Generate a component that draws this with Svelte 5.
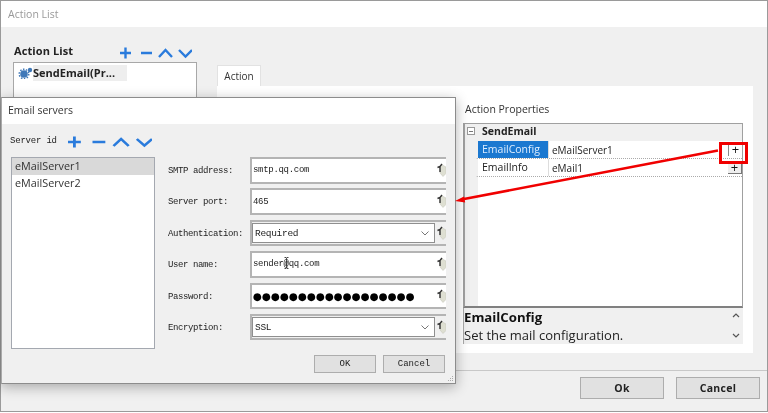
<script>
  const rows = [
    { label: 'SMTP address:', value: 'smtp.qq.com', kind: 'text' },
    { label: 'Server port:', value: '465', kind: 'text' },
    { label: 'Authentication:', value: 'Required', kind: 'combo' },
    { label: 'User name:', value: 'sender@qq.com', kind: 'text', pointer: true },
    { label: 'Password:', value: '●●●●●●●●●●●●●●●●●●', kind: 'pass' },
    { label: 'Encryption:', value: 'SSL', kind: 'combo' }
  ];
</script>

{#snippet toolIcons(cls)}
  <svg class={cls} viewBox="0 0 72 12" preserveAspectRatio="none" aria-hidden="true">
    <path d="M0 6h11M5.500 .5v11M21 6h11M39 10l6.500-7 6.500 7M59 3l6.500 6.500L72 3" fill="none" stroke="#2a7bdc" stroke-width="2.400"/>
  </svg>
{/snippet}

<div class="page">
  <div class="win">
    <header class="win-title">Action List</header>
    <div class="win-body">
      <aside class="left">
        <div class="left-head">
          <h2>Action List</h2>
          {@render toolIcons('tools-main')}
        </div>
        <div class="action-box">
          <svg class="gear" viewBox="0 0 15 12" aria-hidden="true">
            <circle cx="6" cy="7" r="3.800" fill="#3f78b8"/>
            <circle cx="6" cy="7" r="4.800" fill="none" stroke="#3f78b8" stroke-width="1.400" stroke-dasharray="1.500 1.500"/>
            <circle cx="12" cy="3" r="2.200" fill="#3f78b8"/>
          </svg>
          <span class="action-item">SendEmail(Pr...</span>
        </div>
      </aside>
      <section class="tabs">
        <div class="tab">Action</div>
        <div class="tab-panel">
          <div class="props-title">Action Properties</div>
          <div class="grid">
            <div class="grid-group">
              <span class="minus"></span>
              <b>SendEmail</b>
            </div>
            <div class="grid-row">
              <span class="name selected">EmailConfig</span>
              <span class="val">eMailServer1</span>
              <span class="plus flat">+</span>
            </div>
            <div class="grid-row">
              <span class="name">EmailInfo</span>
              <span class="val">eMail1</span>
              <span class="plus">+</span>
            </div>
            <div class="grid-fill"></div>
          </div>
          <div class="desc">
            <div class="desc-text">
              <b>EmailConfig</b>
              <span>Set the mail configuration.</span>
            </div>
            <div class="desc-scroll">
              <svg viewBox="0 0 8 30" aria-hidden="true"><path d="M1 7l3-3 3 3M1 24l3 3 3-3" fill="none" stroke="#555" stroke-width="1.200"/></svg>
            </div>
          </div>
        </div>
      </section>
    </div>
    <footer class="win-foot">
      <button class="btn-main">Ok</button>
      <button class="btn-main">Cancel</button>
    </footer>
  </div>

  <div class="dlg">
    <header class="dlg-title">Email servers</header>
    <div class="dlg-body">
      <div class="dlg-left">
        <div class="sid">
          <span>Server id</span>
          {@render toolIcons('tools-dlg')}
        </div>
        <div class="server-list">
          <div class="server sel">eMailServer1</div>
          <div class="server">eMailServer2</div>
        </div>
      </div>
      <div class="form">
        {#each rows as r}
          <div class="form-row">
            <label for={r.label}>{r.label}</label>
            <div class="field" class:combo={r.kind === 'combo'}>
              {#if r.kind === 'combo'}
                <div class="select" id={r.label}>
                  <span>{r.value}</span>
                  <svg viewBox="0 0 8 5" aria-hidden="true"><path d="M.500 .500L4 4l3.500-3.500" fill="none" stroke="#777"/></svg>
                </div>
              {:else}
                <span class="text" class:dots={r.kind === 'pass'} id={r.label}>{r.value}</span>
              {/if}
              {#if r.pointer}
                <svg class="ibeam" viewBox="0 0 5 12" aria-hidden="true"><path d="M.500 .5h1.500l.5 1 .5-1h1.500M2.500 1.500v9M.500 11.500h1.500l.5-1 .5 1h1.500" fill="none" stroke="#222" stroke-width=".8"/></svg>
              {/if}
              <svg class="shield" viewBox="0 0 9 14" aria-hidden="true">
                <path d="M2 4L4.500 1.500 9 4v6.500L6 13.500 3 10V5z" fill="#dedfd2" stroke="#c2c2b6" stroke-width=".5"/>
                <path d="M.500 4.500L3 3.500 5 1M3 3.500V9" fill="none" stroke="#333" stroke-width="1.400"/>
              </svg>
            </div>
          </div>
        {/each}
        <div class="dlg-actions">
          <button>OK</button>
          <button>Cancel</button>
        </div>
      </div>
    </div>
    <svg class="grip" viewBox="0 0 7 7" aria-hidden="true">
      <path d="M5 1h1v1H5zM3 3h1v1H3zM5 3h1v1H5zM1 5h1v1H1zM3 5h1v1H3zM5 5h1v1H5z" fill="#aaa"/>
    </svg>
  </div>

  <svg class="callout" viewBox="0 0 768 413" aria-hidden="true">
    <path d="M718 150.500L464 199" stroke="#f00000" stroke-width="2.600" fill="none"/>
    <path d="M455 201l9-4.500 1.200 6z" fill="#f00000"/>
    <rect x="720.500" y="143.500" width="26" height="19" fill="none" stroke="#f00000" stroke-width="3"/>
  </svg>
</div>

<style>
  :global(body) { margin: 0; background: #fff; }
  .page {
    position: relative;
    width: 768px;
    height: 413px;
    overflow: hidden;
    font-family: "Open Sans", "Noto Sans", sans-serif;
    color: #222;
    filter: blur(0.35px);
  }
  .win {
    box-sizing: border-box;
    height: 412px;
    border: 1px solid #9a9a9a;
    background: #f0f0f0;
    display: flex;
    flex-direction: column;
  }
  .win-title {
    height: 26px;
    flex: none;
    background: #fff;
    color: #999;
    font-size: 10.5px;
    line-height: 26px;
    padding-left: 7px;
  }
  .win-body {
    flex: 1;
    display: flex;
    padding: 15px 14px 0 12px;
    min-height: 0;
  }
  .left { width: 184px; flex: none; margin-right: 20px; }
  .left-head { display: flex; height: 20px; align-items: flex-start; position: relative; }
  .left-head h2 { margin: 0 0 0 1px; font-size: 11px; line-height: 18px; font-weight: 700; color: #222; letter-spacing: .1px; }
  .tools-main { width: 72px; height: 12px; margin-left: 47px; margin-top: 5px; }
  .action-box {
    box-sizing: border-box;
    height: 80px;
    border: 1px solid #a8a8a8;
    background: #fff;
    display: flex;
    align-items: flex-start;
    padding: 2px 0 0 4px;
  }
  .gear { width: 15px; height: 12px; margin-top: 2px; flex: none; }
  .action-item {
    background: #eee;
    font-weight: 700;
    font-size: 11px;
    line-height: 16px;
    padding: 0 6px 0 0;
    width: 88px;
  }
  .tabs { flex: 1; display: flex; flex-direction: column; padding-top: 23px; min-width: 0; }
  .tab {
    align-self: flex-start;
    box-sizing: border-box;
    width: 44px;
    height: 21px;
    background: #fff;
    border: 1px solid #e2e2e2;
    border-bottom: none;
    font-size: 10px;
    line-height: 20px;
    text-align: center;
    color: #333;
  }
  .tab-panel {
    box-sizing: border-box;
    height: 267px;
    background: #fff;
    padding: 15px 10px 0 246px;
    display: flex;
    flex-direction: column;
  }
  .props-title { font-size: 10.5px; height: 22px; line-height: 16px; color: #333; padding-left: 2px; }
  .grid {
    box-sizing: border-box;
    height: 185px;
    flex: none;
    border: 1px solid #a0a0a0;
    border-bottom: 2px solid #808080;
    border-left-width: 2px;
    background: #f0f0f0;
    display: flex;
    flex-direction: column;
    font-size: 10.5px;
  }
  .grid-group {
    flex: none;
    height: 17px;
    background: #f0f0f0;
    display: flex;
    align-items: flex-start;
    font-size: 10.5px;
    line-height: 14px;
    padding-left: 2px;
  }
  .grid-group b { margin-left: 7px; }
  .minus {
    box-sizing: border-box;
    width: 8px;
    height: 8px;
    margin-top: 3px;
    border: 1px solid #999;
    background: linear-gradient(#777, #777) center / 4px 1px no-repeat #fff;
  }
  .grid-row {
    flex: none;
    height: 18px;
    margin-left: 11px;
    display: flex;
    align-items: center;
    border-bottom: 1px dotted #aaa;
    box-sizing: border-box;
    border-left: 2px solid #f0f0f0;
    background: #fff;
    position: relative;
  }
  .name {
    width: 71px;
    height: 100%;
    flex: none;
    line-height: 16px;
    padding-left: 4px;
    box-sizing: border-box;
    border-right: 1px solid #ddd;
    color: #222;
  }
  .selected { background: #1b78d0; color: #dfeeff; }
  .val { margin-left: 3px; flex: 1; font-size: 10px; }
  .plus {
    box-sizing: border-box;
    width: 14px;
    height: 13px;
    background: #eee;
    border-right: 1px solid #777;
    border-bottom: 1px solid #777;
    text-align: center;
    font-size: 13px;
    line-height: 12px;
    color: #111;
  }
  .plus.flat { background: #fff; border: 0; border-left: 1px solid #888; }
  .grid-fill { flex: 1; background: #fff; margin-left: 13px; }
  .desc {
    height: 36px;
    flex: none;
    background: #f0f0f0;
    display: flex;
    border-left: 1px solid #a8a8a8;
    width: 279px;
  }
  .desc-text { flex: 1; display: flex; flex-direction: column; font-size: 13px; line-height: 18px; white-space: nowrap; }
  .desc-text b { color: #111; font-size: 13.200px; line-height: 18px; }
  .desc-text span { line-height: 18px; }
  .desc-scroll { width: 15px; background: #f0f0f0; }
  .desc-scroll svg { width: 8px; height: 30px; margin: 2px 0 0 4px; display: block; }
  .win-foot {
    flex: none;
    height: 41px;
    border-top: 1px solid #c8c8c8;
    display: flex;
    justify-content: flex-end;
    gap: 12px;
    padding: 6px 7px 0 0;
    box-sizing: border-box;
  }
  .btn-main {
    box-sizing: border-box;
    width: 84px;
    height: 22px;
    background: #e1e1e1;
    border: 1px solid #adadad;
    font: 700 10.5px "Open Sans", sans-serif;
    color: #222;
    padding: 0;
    letter-spacing: .3px;
  }

  .dlg {
    position: absolute;
    left: 1px;
    top: 97px;
    box-sizing: border-box;
    width: 455px;
    height: 287px;
    background: #f0f0f0;
    border: 1px solid #8c8c8c;
    border-left-color: #aaa;
    box-shadow: 0 3px 12px rgba(0, 0, 0, .3);
    display: flex;
    flex-direction: column;
  }
  .dlg-title {
    flex: none;
    height: 26px;
    background: #fff;
    font-size: 10.5px;
    line-height: 24px;
    padding-left: 6px;
    color: #333;
  }
  .dlg-body { flex: 1; display: flex; padding: 0 0 0 9px; }
  .dlg-left { width: 144px; flex: none; margin-right: 13px; }
  .sid {
    height: 33px;
    display: flex;
    align-items: flex-start;
    font: 9px "Liberation Mono", monospace;
    line-height: 34px;
    letter-spacing: -.2px;
    color: #222;
    margin-left: -1px;
  }
  .tools-dlg { width: 84px; height: 12px; margin-left: 11px; margin-top: 12px; }
  .server-list {
    box-sizing: border-box;
    height: 192px;
    background: #fff;
    border: 1px solid #a4a8b0;
    font-size: 10.8px;
  }
  .server { height: 16.500px; line-height: 16.500px; padding-left: 3px; color: #333; }
  .server.sel { background: #d9d9d9; }
  .form { flex: 1; min-width: 0; padding-top: 33px; }
  .form-row { display: flex; height: 31.400px; align-items: flex-start; }
  .form-row label {
    width: 82px;
    flex: none;
    font: 9px "Liberation Mono", monospace;
    letter-spacing: -.4px;
    line-height: 29px;
    color: #222;
  }
  .field {
    box-sizing: border-box;
    width: 196px;
    height: 26.500px;
    background: #fff;
    border: 2px solid #b4b4b4;
    border-right: 0;
    display: flex;
    align-items: center;
    position: relative;
    font: 9px "Liberation Mono", monospace;
    letter-spacing: -.3px;
    padding-left: 1px;
    color: #222;
  }
  .field.combo { background: #f0f0f0; padding-left: 0; }
  .text { flex: 1; }
  .text.dots { font: 10.3px "DejaVu Sans", sans-serif; letter-spacing: 0; color: #000; }
  .select {
    box-sizing: border-box;
    width: 183px;
    height: 20px;
    background: #fff;
    border: 1px solid #8f8f8f;
    display: flex;
    align-items: center;
    justify-content: space-between;
    padding: 0 5px 0 2px;
    font-size: 9.500px;
  }
  .select svg { width: 8px; height: 5px; }
  .ibeam { position: absolute; left: 32px; top: 4px; width: 5px; height: 12px; }
  .shield { position: absolute; right: 0; top: 4px; width: 9px; height: 14px; }
  .dlg-actions { display: flex; gap: 7px; padding: 5px 0 0 146px; margin-top: 5px; }
  .dlg-actions button {
    box-sizing: border-box;
    width: 62px;
    height: 18px;
    background: #e1e1e1;
    border: 1px solid #adadad;
    font: 9px "Liberation Mono", monospace;
    color: #222;
    padding: 0;
  }
  .grip { position: absolute; right: 1px; bottom: 1px; width: 7px; height: 7px; }
  .callout { position: absolute; inset: 0; width: 768px; height: 413px; pointer-events: none; }
</style>
